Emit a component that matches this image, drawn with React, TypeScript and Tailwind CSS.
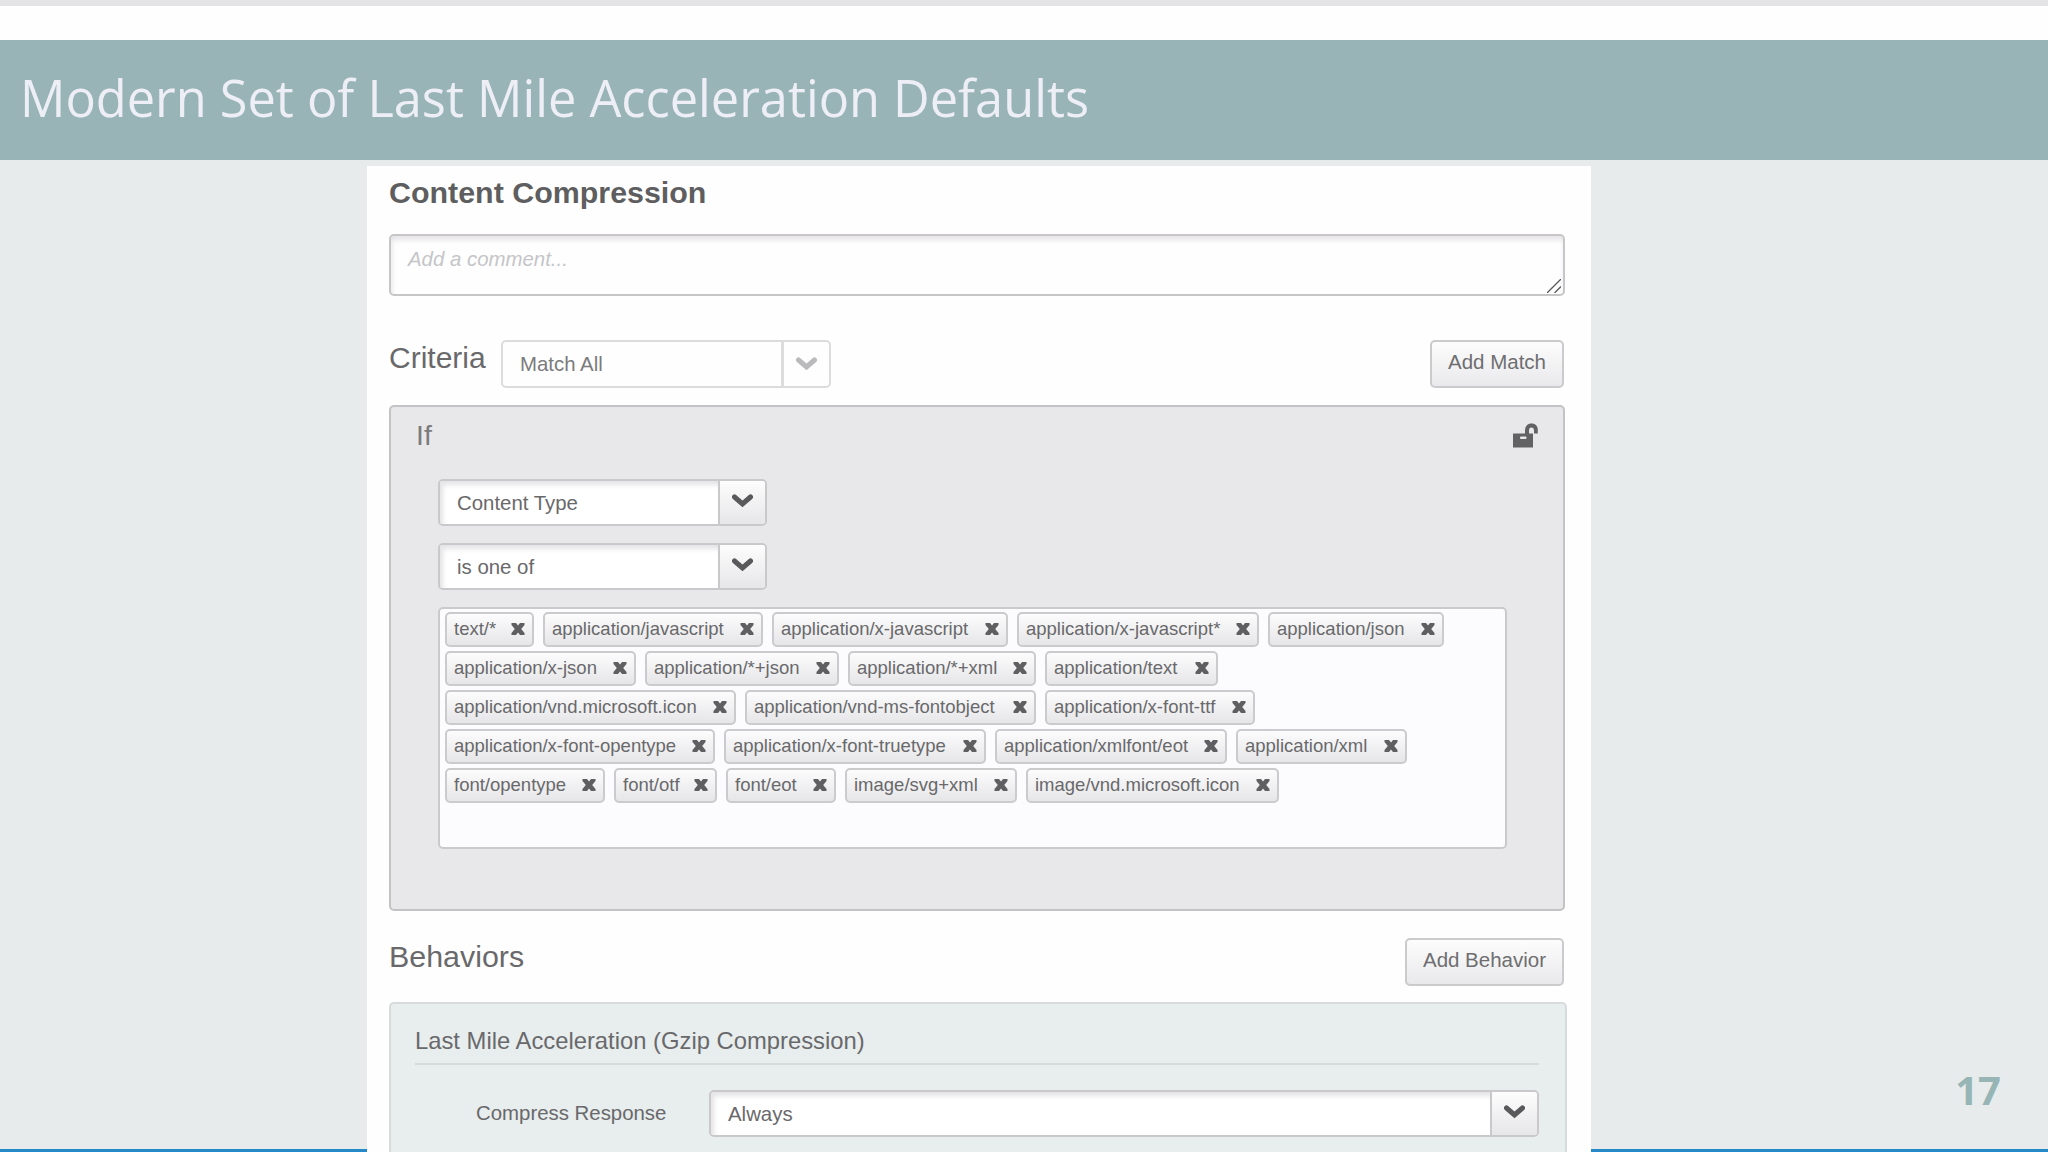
import clsx from 'clsx';

const tagRows = [
  [
    { label: 'text/*', width: 89 },
    { label: 'application/javascript', width: 220 },
    { label: 'application/x-javascript', width: 236 },
    { label: 'application/x-javascript*', width: 242 },
    { label: 'application/json', width: 176 },
  ],
  [
    { label: 'application/x-json', width: 191 },
    { label: 'application/*+json', width: 194 },
    { label: 'application/*+xml', width: 188 },
    { label: 'application/text', width: 173 },
  ],
  [
    { label: 'application/vnd.microsoft.icon', width: 291 },
    { label: 'application/vnd-ms-fontobject', width: 291 },
    { label: 'application/x-font-ttf', width: 210 },
  ],
  [
    { label: 'application/x-font-opentype', width: 270 },
    { label: 'application/x-font-truetype', width: 262 },
    { label: 'application/xmlfont/eot', width: 232 },
    { label: 'application/xml', width: 171 },
  ],
  [
    { label: 'font/opentype', width: 160 },
    { label: 'font/otf', width: 103 },
    { label: 'font/eot', width: 110 },
    { label: 'image/svg+xml', width: 172 },
    { label: 'image/vnd.microsoft.icon', width: 253 },
  ],
];

function Chevron({ className }: { className?: string }) {
  return (
    <svg viewBox="0 0 21 14" className={clsx('w-[21px] h-[14px]', className)}>
      <path d="M2.5 3 L10.5 10 L18.5 3" fill="none" stroke="currentColor" strokeWidth="5" strokeLinecap="round" />
    </svg>
  );
}

function CloseIcon() {
  return (
    <svg viewBox="0 0 14 14" className="w-[14px] h-[14px] text-[#5f5f61] shrink-0">
      <path
        d="M0.5 1 H5 L7 3.6 L9 1 H13.5 V3 L10.2 7 L13.5 11 V13 H9 L7 10.4 L5 13 H0.5 V11 L3.8 7 L0.5 3 Z"
        fill="currentColor"
      />
    </svg>
  );
}

function UnlockIcon() {
  return (
    <svg viewBox="0 0 25 25" className="w-[25px] h-[25px] text-[#626264]">
      <path
        d="M0 10.5 H12 V8 C12 3 14.5 0.5 18.5 0.5 C22.5 0.5 24.8 3 24.8 7 V10.5 H21 V7.5 C21 5.5 20 4.4 18.4 4.4 C16.8 4.4 16 5.5 16 7.5 V10.5 H20 V24.5 H0 Z"
        fill="currentColor"
      />
      <rect x="7" y="13.5" width="6.5" height="2.6" rx="1" fill="#e8e8ea" />
    </svg>
  );
}

function Select({ value, className }: { value: string; className?: string }) {
  return (
    <div className={clsx('flex h-[47px] border-2 border-[#c9c9cc] rounded-[5px] bg-white overflow-hidden', className)}>
      <div className="flex-1 flex items-center pl-[17px] pt-px shadow-[inset_3px_4px_5px_#e4e4e6]">{value}</div>
      <div className="w-[47px] border-l-2 border-[#c9c9cc] bg-gradient-to-b from-[#fdfdfd] to-[#e6e6e9] flex items-center justify-center">
        <Chevron className="text-[#59595b] -mt-1" />
      </div>
    </div>
  );
}

function Button({ label, className }: { label: string; className?: string }) {
  return (
    <button
      className={clsx(
        'h-[48px] border-2 border-[#cbcbce] rounded-[5px] bg-gradient-to-b from-[#fdfdfd] to-[#e9e8eb] text-[20.5px] text-[#6e6e70] whitespace-nowrap pb-[3px]',
        className
      )}
    >
      {label}
    </button>
  );
}

export default function App() {
  return (
    <div className="w-[2048px] h-[1152px] overflow-hidden flex flex-col bg-[#e7ebec] border-t-6 border-[#e4e4e7]">
      <div className="h-[34px] shrink-0 bg-[#fefefe]"></div>
      <header className="h-[120px] shrink-0 bg-[#98b4b7] pl-[20px] pb-[5px] flex items-center">
        <h1 className="font-['Open_Sans',sans-serif] text-[50.5px] text-[#eeeff6] whitespace-nowrap">
          Modern Set of Last Mile Acceleration Defaults
        </h1>
      </header>

      <div className="flex-1 min-h-0 flex">
        <div className="w-[367px] flex items-end">
          <div className="w-full h-[3px] bg-[#2489c6]"></div>
        </div>

        <main className="w-[1224px] mt-[6px] pt-[8px] pl-[22px] pr-[26px] bg-[#fefefe] overflow-hidden font-['Liberation_Sans',sans-serif] text-[20.4px] text-[#69696b]">
          <h2 className="text-[30.4px] leading-[36px] font-bold text-[#5e5e60]">Content Compression</h2>

          <div className="mt-[24px] h-[62px] border-2 border-[#c6c6c9] rounded-[5px] pl-[17px] pt-[10px] flex justify-between shadow-[inset_1px_4px_5px_#e6e4e8]">
            <span className="italic leading-[26px] text-[#c5c5c8]">Add a comment...</span>
            <svg viewBox="0 0 14 14" className="w-[14px] h-[14px] mt-[33px] mr-[2px]">
              <path d="M0 14 L14 0 M7.5 14 L14 7.5" stroke="#59595b" strokeWidth="1.3" fill="none" />
            </svg>
          </div>

          <div className="mt-[44px] h-[48px] flex items-start">
            <span className="text-[30px] leading-[36px] w-[112px]">Criteria</span>
            <div className="w-[330px] h-[48px] border-2 border-[#dcdcdf] rounded-[5px] flex">
              <div className="flex-1 flex items-center pl-[17px] pt-px text-[#7b7b7d]">Match All</div>
              <div className="w-[48px] border-l-3 border-[#dcdcdf] flex items-center justify-center">
                <Chevron className="text-[#bababd] -mt-px" />
              </div>
            </div>
            <Button label="Add Match" className="w-[134px] ml-auto mr-px" />
          </div>

          <section className="mt-[17px] h-[506px] border-2 border-[#c3c3c6] rounded-[5px] bg-[#e8e8ea] pl-[47px] pr-[56px]">
            <div className="-ml-[22px] -mr-[32px] mt-[10px] h-[36px] flex justify-between">
              <span className="text-[28.5px] leading-[36px] text-[#7b7b7d]">If</span>
              <div className="mt-[6px] mr-px">
                <UnlockIcon />
              </div>
            </div>
            <Select value="Content Type" className="w-[329px] mt-[26px]" />
            <Select value="is one of" className="w-[329px] mt-[17px]" />

            <div className="mt-[17px] h-[242px] border-2 border-[#cacacd] rounded-[5px] bg-[#fcfcfe] pl-[5px] pt-[3px] flex flex-col gap-[4px]">
              {tagRows.map((row, i) => (
                <div key={i} className="flex gap-[9px]">
                  {row.map(tag => (
                    <div
                      key={tag.label}
                      style={{ width: tag.width }}
                      className="h-[35px] border-2 border-[#cbcbce] rounded-[5px] bg-gradient-to-b from-[#fcfcfd] to-[#e6e6e8] pl-[7px] pr-[7px] pb-px flex items-center justify-between text-[18.5px] leading-[28px] whitespace-nowrap"
                    >
                      {tag.label}
                      <CloseIcon />
                    </div>
                  ))}
                </div>
              ))}
            </div>
          </section>

          <div className="mt-[27px] h-[47px] flex items-start justify-between">
            <span className="text-[30.4px] leading-[36px]">Behaviors</span>
            <Button label="Add Behavior" className="w-[159px] mr-px" />
          </div>

          <section className="mt-[17px] -mr-[2px] h-[170px] border-2 border-[#d7dbdc] rounded-[5px] bg-[#e8edee] pl-[24px] pr-[26px]">
            <h3 className="mt-[21px] h-[40px] border-b-2 border-[#d5dadb] text-[23.8px] leading-[32px]">
              Last Mile Acceleration (Gzip Compression)
            </h3>
            <div className="mt-[25px] flex items-center pl-[61px]">
              <span className="w-[233px]">Compress Response</span>
              <Select value="Always" className="flex-1" />
            </div>
          </section>
        </main>

        <div className="flex-1 flex flex-col justify-end">
          <span className="self-end mr-[47px] mb-[29px] font-['Open_Sans',sans-serif] font-bold text-[40px] leading-[60px] text-[#96b5b4]">
            17
          </span>
          <div className="w-full h-[3px] bg-[#2489c6]"></div>
        </div>
      </div>
    </div>
  );
}
